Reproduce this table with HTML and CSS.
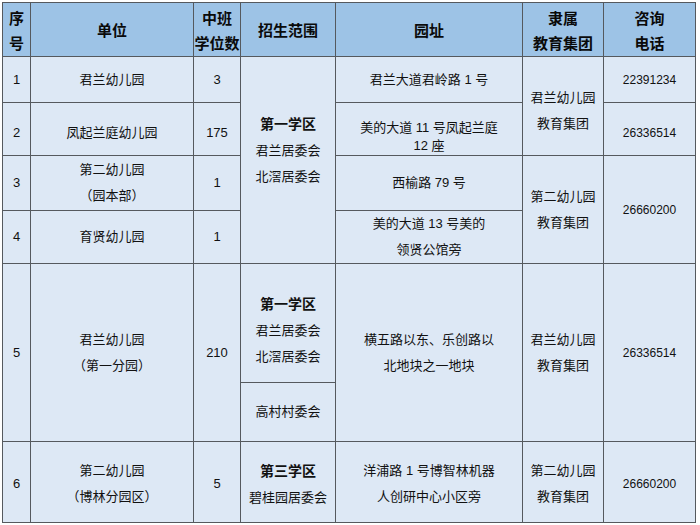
FILE: index.html
```html
<!DOCTYPE html>
<html lang="zh-CN">
<head>
<meta charset="utf-8">
<title>招生范围</title>
<link rel="stylesheet" href="styles.css">
</head>
<body>
<table class="tbl">
  <colgroup>
    <col class="c1"><col class="c2"><col class="c3"><col class="c4"><col class="c5"><col class="c6"><col class="c7">
  </colgroup>
  <thead>
    <tr class="rh">
      <th>序<br>号</th>
      <th>单位</th>
      <th>中班<br>学位数</th>
      <th>招生范围</th>
      <th>园址</th>
      <th>隶属<br>教育集团</th>
      <th>咨询<br>电话</th>
    </tr>
  </thead>
  <tbody>
    <tr class="r1">
      <td>1</td>
      <td>君兰幼儿园</td>
      <td>3</td>
      <td rowspan="4" class="scope1"><b>第一学区</b><br>君兰居委会<br>北滘居委会</td>
      <td>君兰大道君岭路 1 号</td>
      <td rowspan="2" class="grp1">君兰幼儿园<br>教育集团</td>
      <td class="ph">22391234</td>
    </tr>
    <tr class="r2">
      <td>2</td>
      <td>凤起兰庭幼儿园</td>
      <td>175</td>
      <td class="tight">美的大道 11 号凤起兰庭<br>12 座</td>
      <td class="ph">26336514</td>
    </tr>
    <tr class="r3">
      <td>3</td>
      <td>第二幼儿园<br>（园本部）</td>
      <td>1</td>
      <td>西榆路 79 号</td>
      <td rowspan="2">第二幼儿园<br>教育集团</td>
      <td rowspan="2" class="ph">26660200</td>
    </tr>
    <tr class="r4">
      <td>4</td>
      <td>育贤幼儿园</td>
      <td>1</td>
      <td>美的大道 13 号美的<br>领贤公馆旁</td>
    </tr>
    <tr class="r5a">
      <td rowspan="2">5</td>
      <td rowspan="2">君兰幼儿园<br>（第一分园）</td>
      <td rowspan="2">210</td>
      <td class="scope5"><b>第一学区</b><br>君兰居委会<br>北滘居委会</td>
      <td rowspan="2">横五路以东、乐创路以<br>北地块之一地块</td>
      <td rowspan="2">君兰幼儿园<br>教育集团</td>
      <td rowspan="2" class="ph">26336514</td>
    </tr>
    <tr class="r5b">
      <td>高村村委会</td>
    </tr>
    <tr class="r6">
      <td>6</td>
      <td>第二幼儿园<br>（博林分园区）</td>
      <td>5</td>
      <td><b>第三学区</b><br>碧桂园居委会</td>
      <td>洋浦路 1 号博智林机器<br>人创研中心小区旁</td>
      <td>第二幼儿园<br>教育集团</td>
      <td class="ph">26660200</td>
    </tr>
  </tbody>
</table>
</body>
</html>
```
FILE: styles.css
```css
html, body {
  margin: 0;
  padding: 0;
  background: #ffffff;
}
body {
  padding: 2px 0 0 2px;
  font-family: "Liberation Sans", "Noto Sans CJK SC", sans-serif;
  color: #111;
}
.tbl {
  border-collapse: collapse;
  table-layout: fixed;
  width: 693px;
  font-size: 13px;
  line-height: 26px;
}
.c1 { width: 28px; }
.c2 { width: 163px; }
.c3 { width: 47px; }
.c4 { width: 95px; }
.c5 { width: 187px; }
.c6 { width: 81px; }
.c7 { width: 92px; }
.tbl th, .tbl td {
  border: 1px solid #55595e;
  padding: 0;
  text-align: center;
  vertical-align: middle;
  overflow: hidden;
  white-space: nowrap;
}
.tbl th {
  background: #9dc3e6;
  font-size: 15px;
  font-weight: bold;
  color: #0a0a0a;
  line-height: 25px;
  padding-top: 2px;
}
.tbl td {
  background: #dde8f5;
}
.tbl b {
  font-weight: bold;
  font-size: 14px;
}
.rh { height: 54px; }
.r1 { height: 46px; }
.r2 { height: 53px; }
.r3 { height: 55px; }
.r4 { height: 52px; }
.r5a { height: 119px; }
.r5b { height: 59px; }
.r6 { height: 81px; }
.r2 td { padding-top: 8px; }
.tbl .scope1 { padding-bottom: 20px; }
.tbl .scope5 { padding-top: 14px; }
.tbl .grp1 { padding-top: 10px; }
.tbl .r2 .tight { line-height: 18px; padding-top: 15px; }
.tbl .ph { font-size: 12px; }
.tbl .r6 td { padding-top: 4px; }
```
